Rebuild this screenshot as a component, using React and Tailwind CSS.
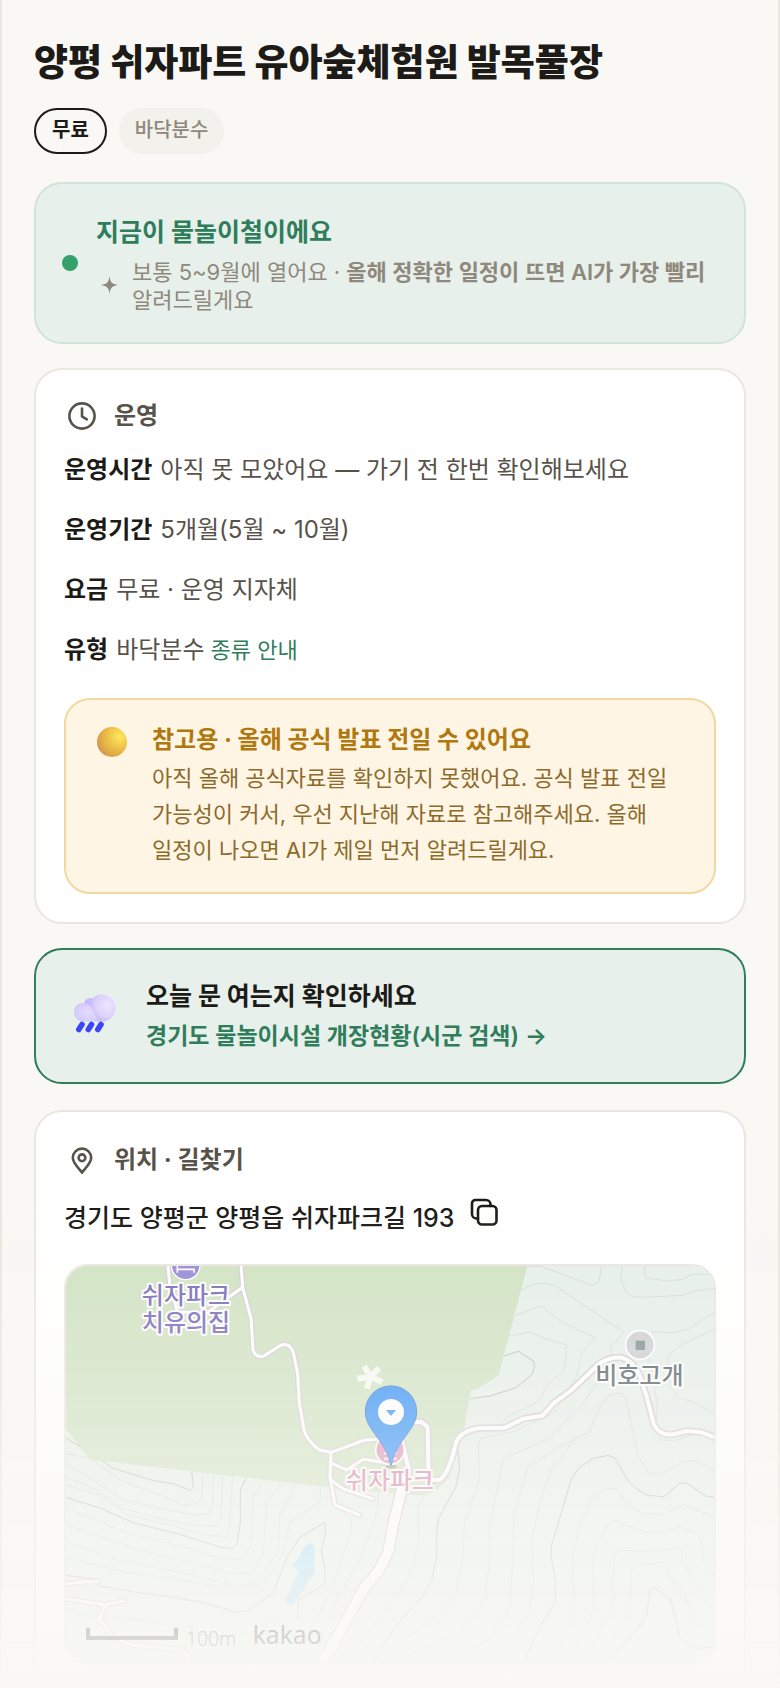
const infoRows = [
  { label: '운영시간', value: '아직 못 모았어요 — 가기 전 한번 확인해보세요' },
  { label: '운영기간', value: '5개월(5월 ~ 10월)' },
  { label: '요금', value: '무료 · 운영 지자체' },
  { label: '유형', value: '바닥분수', link: '종류 안내' },
];

// Contour lines on the left half of the map
const contoursLeft = [
  'M48 610 L120 625 L210 690 L330 735 L400 765 L440 760 L455 745 L458 668',
  'M48 640 L130 690 L220 750 L330 775 L430 795 L475 792 L487 770 L490 672',
  'M48 680 L140 720 L215 775 L330 805 L430 825 L500 828 L512 810 L518 676',
  'M48 705 L150 735 L235 795 L360 825 L470 855 L525 860 L538 840 L548 682',
  'M48 775 L150 815 L250 855 L400 890 L510 925 L570 930 L603 890 L610 740 L640 692',
  'M48 825 L180 870 L300 910 L420 935 L540 970 L610 968 L640 910 L645 820 L650 755 L695 700',
  'M48 875 L200 930 L330 955 L450 980 L560 1010 L625 995 L685 900 L688 800 L735 705',
  'M48 925 L220 965 L350 985 L480 1005 L570 1020 L640 1000 L700 910 L718 820 L810 755 L812 712',
  'M48 1075 L100 1095 L190 1100 L330 1120 L420 1150 L520 1165 L600 1150 L700 1090',
  'M850 760 L905 808 L903 850 L850 1000 L800 1110 L720 1230',
  'M985 720 L985 775 L930 930 L860 1050 L790 1235',
];

const contoursRight = [
  'M380 48 L425 50 L578 106 L597 95 L605 48',
  'M668 48 L662 85 L677 125 L700 140 L730 142 L850 136 L885 122 L942 115',
  'M735 48 L733 70 L740 84 L800 93 L845 88 L878 73 L942 73',
  'M362 122 L400 102 L442 100 L470 110 L672 247 L631 292 L637 320',
  'M345 197 L422 168 L487 217 L587 264 L547 304 L530 380 L460 490 L340 545 L243 565 L235 580 L238 685 L192 825 L190 910 L170 1025 L150 1065 L0 1180',
  'M325 258 L392 246 L438 267 L500 285 L495 345 L488 362 L442 405 L415 455 L322 500 L305 520',
  'M755 245 L823 248 L868 236 L942 188',
  'M942 238 L845 283 L806 315 L803 350 L812 410 L835 443 L890 460 L942 490',
  'M748 325 L772 465 L768 540 L783 570 L825 571 L900 548 L942 565',
  'M600 385 L548 462 L440 570 L310 625 L267 840 L271 905 L255 1050 L190 1140 L10 1225',
  'M942 660 L890 634 L850 634 L783 673 L745 670 L715 622 L678 450 L665 432 L650 429 L625 438 L602 466 L567 546 L480 590 L385 650 L342 790 L340 890 L330 1070 L270 1165 L160 1230',
  'M530 560 L455 660 L428 727 L395 865 L401 1005 L390 1080 L335 1175',
  'M942 800 L850 765 L787 793 L730 790 L688 768 L650 718 L630 714 L580 738 L548 800 L517 915 L525 1070 L460 1235',
  'M942 980 L912 938 L902 865 L888 848 L840 832 L790 847 L735 846 L640 812 L618 830 L578 920 L583 1075 L505 1235',
  'M942 1065 L920 1060 L885 995 L845 935 L847 898 L820 894 L780 903 L660 901 L643 912 L638 1075 L560 1215',
  'M942 1130 L900 1128 L875 1100 L855 1035 L806 978 L800 937 L785 937 L720 945 L693 962 L692 1085 L605 1230',
  'M70 738 L55 770 L55 888 L25 990 L-60 1100 L-160 1230',
];

function SectionTitle({ icon, children }) {
  return (
    <h2 className="flex items-center gap-4 text-2xl leading-8 font-bold text-[#57534a]">
      {icon}
      {children}
    </h2>
  );
}

function ClockIcon() {
  return (
    <svg className="ml-0.5 size-8" viewBox="0 0 32 32" fill="none" stroke="currentColor" strokeWidth="2.6" strokeLinecap="round" strokeLinejoin="round" aria-hidden="true">
      <circle cx="16" cy="16" r="12.6" />
      <path d="M16 8.5V16.4L20.8 19.4" />
    </svg>
  );
}

function PinIcon() {
  return (
    <svg className="ml-0.5 size-8" viewBox="0 0 32 32" fill="none" stroke="currentColor" strokeWidth="2.6" strokeLinejoin="round" aria-hidden="true">
      <path d="M16 28.6C12.4 24 6.8 19 6.8 13.8a9.2 9.2 0 0 1 18.4 0C25.2 19 19.6 24 16 28.6Z" />
      <circle cx="16" cy="13.8" r="3.4" />
    </svg>
  );
}

function CopyIcon() {
  return (
    <svg className="size-7" viewBox="0 0 28 28" fill="none" stroke="currentColor" strokeWidth="2.6" strokeLinecap="round" strokeLinejoin="round" aria-hidden="true">
      <rect x="8" y="8" width="18.5" height="18.5" rx="4" />
      <path d="M8 20.5H6.5C4 20.5 2 18.5 2 16V5.500C2 3.500 3.500 2 5.500 2H16C18.500 2 20.500 4 20.500 6.500V8" />
    </svg>
  );
}

function Sparkle() {
  return (
    <svg className="size-5 shrink-0" viewBox="0 0 20 20" fill="#8f887c" aria-hidden="true">
      <path d="M9.500 0.500 C10.500 6.500 12 8 18 9 C12 10 10.500 11.500 9.500 17.500 C8.500 11.500 7 10 1 9 C7 8 8.500 6.500 9.500 0.500Z" />
    </svg>
  );
}

function Coin() {
  return (
    <svg className="mt-1 size-8 shrink-0" viewBox="0 0 32 32" aria-hidden="true">
      <defs>
        <radialGradient id="coin" cx="0.75" cy="0.32" r="0.8">
          <stop offset="0" stopColor="#ffe85c" />
          <stop offset="0.5" stopColor="#edc148" />
          <stop offset="0.9" stopColor="#d9a145" />
          <stop offset="1" stopColor="#d38f58" />
        </radialGradient>
      </defs>
      <circle cx="16" cy="16" r="15" fill="url(#coin)" />
    </svg>
  );
}

function RainCloud() {
  return (
    <svg className="size-12 shrink-0" viewBox="0 0 48 48" aria-hidden="true">
      <defs>
        <radialGradient id="cloudBig" cx="0.68" cy="0.4" r="0.7">
          <stop offset="0" stopColor="#eee5ff" />
          <stop offset="0.6" stopColor="#dcd2fd" />
          <stop offset="1" stopColor="#c0b6f5" />
        </radialGradient>
        <radialGradient id="cloudSmall" cx="0.5" cy="0.5" r="0.65">
          <stop offset="0" stopColor="#e4dcfe" />
          <stop offset="0.7" stopColor="#d7cdfd" />
          <stop offset="1" stopColor="#c3baf8" />
        </radialGradient>
      </defs>
      <g>
        <circle cx="18" cy="12" r="6" fill="#c5bcf8" />
        <circle cx="30" cy="16" r="13.5" fill="url(#cloudBig)" />
        <path d="M11 11 C16 11 20 15 21 19 C24 24 25 29.500 30 29.500 L12 29.500 C6 29.500 2 25.500 2 20 C2 14.500 6 11 11 11Z" fill="url(#cloudSmall)" />
      </g>
      <g stroke="#3a45fb" strokeWidth="5.6" strokeLinecap="round">
        <path d="M10 32.500 L6.800 37.500" />
        <path d="M19.500 32.500 L16.300 37.500" />
        <path d="M29 32.500 L25.800 37.500" />
      </g>
    </svg>
  );
}

function ParkMap() {
  return (
    <svg
      className="block w-full rounded-[22px] bg-[#e6efe9]"
      viewBox="48 48 1944 1191"
      preserveAspectRatio="xMidYMid slice"
      fill="none"
      role="img"
      aria-label="쉬자파크"
    >
      <g stroke="#d3dcd5" strokeWidth="3">
        {contoursLeft.map((d) => (
          <path key={d} d={d} />
        ))}
        <g transform="translate(1050 0)">
          {contoursRight.map((d) => (
            <path key={d} d={d} />
          ))}
        </g>
      </g>

      {/* Index contours are a little darker */}
      <g stroke="#b3bcae" strokeWidth="3">
        <path d="M48 563 L90 590 L155 632 L190 655 L310 692 L375 702 L420 722 L430 712 L425 663" />
        <path d="M48 742 L155 776 L250 818 L385 852 L510 891 L550 895 L561 880 L571 820 L571 720 L588 684" />
        <path d="M48 976 L140 988 L145 1007 L250 1025 L370 1042 L460 1058 L560 1087 L597 1082 L670 1028 L712 920 L750 862 L824 817 L826 850 L814 900 L825 960 L824 1005 L745 1050 L742 1110" />
        <path d="M1222 585 L1229 655 L1218 710 L1166 805 L1160 850 L1160 920 L1146 985 L1118 1040 L1040 1125 L970 1235" />
        <path d="M1260 446 L1320 438 L1398 413 L1447 372 L1454 350 L1450 333 L1405 304 L1362 318" />
        <path d="M1992 742 L1967 738 L1910 699 L1890 699 L1842 740 L1793 736 L1757 715 L1733 690 L1695 625 L1675 616 L1630 625 L1585 655 L1563 690 L1504 888 L1504 925 L1517 995 L1515 1055 L1470 1130 L1423 1235" />
        <path d="M1992 1190 L1950 1195 L1920 1190 L1890 1160 L1862 1050 L1815 1012 L1800 1018 L1790 1095 L1765 1135 L1705 1195 L1690 1235" />
      </g>

      <path d="M48 48 H1432 L1346 374 L1285 416 L1263 420 L1243 535 L1220 590 L1200 680 L1160 720 L1124 736 L1080 735 L838 712 L122 629 L48 537Z" fill="#cfe2c1" />
      <path d="M780 880 Q795 880 793 900 L793 975 L780 985 L735 1060 Q715 1070 705 1055 L745 965 L727 945 L752 915 Q760 885 780 880Z" fill="#a8dcf5" />

      <g strokeLinejoin="round" strokeLinecap="round">
        <g stroke="#d5cdd1" strokeWidth="17">
          <path d="M352 30 L360 110 L382 185 L470 190 L578 112 L572 30" />
          <path d="M578 112 L603 205 L609 300 Q615 322 640 319 L690 287 Q718 275 730 308 L743 370 L748 460 L763 545 Q775 575 808 600 L843 607 L945 570 L985 568" />
          <path d="M843 607 L840 680 L855 765 L928 795" />
          <path d="M845 640 L890 660 L940 628 L1000 637" />
          <path d="M843 690 L880 717 L968 746" />
          <path d="M48 1002 L100 995 L143 995" />
          <path d="M48 1046 L165 1065 L222 1052 M165 1070 L147 1105 L190 1165 L250 1185 L400 1200 L418 1235" />
        </g>
        <g stroke="#ffffff" strokeWidth="9">
          <path d="M352 30 L360 110 L382 185 L470 190 L578 112 L572 30" />
          <path d="M578 112 L603 205 L609 300 Q615 322 640 319 L690 287 Q718 275 730 308 L743 370 L748 460 L763 545 Q775 575 808 600 L843 607 L945 570 L985 568" />
          <path d="M843 607 L840 680 L855 765 L928 795" />
          <path d="M845 640 L890 660 L940 628 L1000 637" />
          <path d="M843 690 L880 717 L968 746" />
          <path d="M48 1002 L100 995 L143 995" />
          <path d="M48 1046 L165 1065 L222 1052 M165 1070 L147 1105 L190 1165 L250 1185 L400 1200 L418 1235" />
        </g>
        <g stroke="#d5cdd1" strokeWidth="22">
          <path d="M1090 517 L1115 516 L1133 532 L1136 690 L1168 690 Q1195 675 1215 590 Q1222 545 1285 535 L1365 533 L1420 506 L1478 497 L1510 460 L1565 420 L1640 348 Q1670 320 1715 323 Q1755 335 1770 380 L1790 440 L1812 525 Q1830 558 1870 553 L1910 543 L1955 547 L2010 568" />
          <path d="M1055 570 L1078 665" />
        </g>
        <path d="M1060 700 L1030 820 L1015 905 L985 965 L945 1010 L820 1235" stroke="#d5cdd1" strokeWidth="38" />
        <path d="M1060 700 L1030 820 L1015 905 L985 965 L945 1010 L820 1235" stroke="#ffffff" strokeWidth="29" />
        <g stroke="#ffffff" strokeWidth="12">
          <path d="M1090 517 L1115 516 L1133 532 L1136 690 L1168 690 Q1195 675 1215 590 Q1222 545 1285 535 L1365 533 L1420 506 L1478 497 L1510 460 L1565 420 L1640 348 Q1670 320 1715 323 Q1755 335 1770 380 L1790 440 L1812 525 Q1830 558 1870 553 L1910 543 L1955 547 L2010 568" />
          <path d="M1055 570 L1078 665" />
        </g>
      </g>

      <path d="M962 380 L942 348 M962 380 L987 354 M962 380 L922 386 M962 380 L996 396 M962 380 L950 416" stroke="#f8faf5" strokeWidth="18" />

      {/* Place markers */}
      <circle cx="407" cy="46" r="43" fill="#9587d6" stroke="#fff" strokeWidth="4" />
      <path d="M382 30 V68 M382 58 H432 V68 M394 48 V38 H424 V48" stroke="#fff" strokeWidth="5" />
      <circle cx="1770" cy="285" r="43" fill="#cccdd2" stroke="#fff" strokeWidth="5" />
      <rect x="1757" y="272" width="28" height="28" fill="#7d8b90" />
      <circle cx="1020" cy="600" r="43" fill="#dd8db3" stroke="#fff" strokeWidth="5" />
      <path d="M1002 610 H1040 M1002 626 H1040" stroke="#fff" strokeWidth="5" />

      <g
        fontFamily='"Noto Sans CJK KR", sans-serif'
        fontSize="72"
        fontWeight="500"
        textAnchor="middle"
        stroke="#fff"
        strokeWidth="12"
        strokeLinejoin="round"
        paintOrder="stroke"
      >
        <text fill="#7565b8">
          <tspan x="408" y="162">쉬자파크</tspan>
          <tspan x="408" y="243">치유의집</tspan>
        </text>
        <text x="1768" y="401" fill="#4d5a5f">비호고개</text>
        <text x="1020" y="716" fill="#d27aa6">쉬자파크</text>
      </g>

      {/* Current destination */}
      <ellipse cx="1023" cy="650" rx="18" ry="6" fill="#777" opacity="0.6" />
      <path d="M1023 408 C980 408 946 442 946 486 C946 540 1008 570 1022 646 H1024 C1038 570 1100 540 1100 486 C1100 442 1066 408 1023 408Z" fill="#2b8df7" stroke="#2a6fd0" strokeWidth="3" />
      <circle cx="1023" cy="486" r="39" fill="#fff" />
      <path d="M1008 480 H1038 L1023 498Z" fill="#2b8df7" />

      {/* Scale bar */}
      <path d="M114 1133 V1164 H378 V1133" stroke="#222" strokeWidth="12" />
      <text x="408" y="1187" fill="#444" fontFamily='"Noto Sans", sans-serif' fontSize="58" fontWeight="300">100m</text>
      <text x="608" y="1182" fill="#222" fontFamily='"Noto Sans", sans-serif' fontSize="74" fontWeight="400">kakao</text>
    </svg>
  );
}

export default function App() {
  return (
    <main className="relative min-h-screen break-keep border-x-2 border-[#e9e7df] bg-[#faf8f5] px-8 pt-9 font-[Inter,'Noto_Sans_CJK_KR',sans-serif] text-[#1c1b18]">
      <h1 className="text-[37px] leading-[54px] font-extrabold">양평 쉬자파트 유아숲체험원 발목풀장</h1>

      <div className="mt-4.5 flex gap-3 text-xl leading-6">
        <span className="rounded-full border-2 border-[#1c1b18] px-4 pt-2 pb-2.5 font-semibold">무료</span>
        <span className="rounded-full border-2 border-[#f3f1ec] bg-[#f3f1ec] px-3.5 pt-2 pb-2.5 font-medium text-[#8f887c]">바닥분수</span>
      </div>

      <section className="mt-7 flex items-center gap-4.5 rounded-[28px] border-2 border-[#cfe5d9] bg-[#e8f0eb] px-6.5 py-7">
        <span className="size-4 shrink-0 rounded-full bg-[#34a06c]"></span>
        <div>
          <p className="text-[25px] leading-10 font-bold text-[#2f7d5b]">지금이 물놀이철이에요</p>
          <div className="flex items-center gap-3 pt-1.5 pl-1 text-[22px] leading-7 text-[#8f887c]">
            <Sparkle />
            <p>
              보통 5~9월에 열어요 · <b className="font-semibold">올해 정확한 일정이 뜨면 AI가 가장 빨리</b> 알려드릴게요
            </p>
          </div>
        </div>
      </section>

      <section className="mt-6 rounded-[28px] border-2 border-[#e9e7df] bg-white px-7 pt-7.5 pb-7">
        <SectionTitle icon={<ClockIcon />}>운영</SectionTitle>
        <dl className="mt-4.5 space-y-5 text-2xl leading-10 text-[#57534a]">
          {infoRows.map((row) => (
            <div key={row.label} className="flex items-baseline gap-2">
              <dt className="font-bold text-[#1c1b18]">{row.label}</dt>
              <dd>
                {row.value}
                {row.link && (
                  <a href="#types" className="ml-1.5 text-[22px] text-[#2f7d5b]">
                    {row.link}
                  </a>
                )}
              </dd>
            </div>
          ))}
        </dl>

        <div className="mt-7 flex items-start gap-6 rounded-[26px] border-2 border-[#f0d9a0] bg-[#fff5e4] px-7.5 pt-5.5 pb-6">
          <Coin />
          <div>
            <p className="text-2xl leading-9 font-bold text-[#b0780e]">참고용 · 올해 공식 발표 전일 수 있어요</p>
            <p className="mt-0.5 text-[22px] leading-9 text-[#8c6a2b]">
              아직 올해 공식자료를 확인하지 못했어요. 공식 발표 전일 가능성이 커서, 우선 지난해 자료로 참고해주세요. 올해 일정이 나오면 AI가 제일 먼저 알려드릴게요.
            </p>
          </div>
        </div>
      </section>

      <a href="#open-status" className="mt-6 flex items-center gap-6.5 rounded-[28px] border-2 border-[#2f7d5b] bg-[#e8f0eb] px-9 py-6.5">
        <RainCloud />
        <span>
          <span className="block text-[25px] leading-10 font-bold">오늘 문 여는지 확인하세요</span>
          <span className="block text-[23px] leading-10 font-semibold text-[#2f7d5b]">경기도 물놀이시설 개장현황(시군 검색) →</span>
        </span>
      </a>

      <section className="mt-6.5 rounded-t-[28px] border-2 border-b-0 border-[#e9e7df] bg-white px-7 pt-8 pb-5">
        <SectionTitle icon={<PinIcon />}>위치 · 길찾기</SectionTitle>
        <div className="mt-5.5 flex items-start gap-4 text-[25px] leading-10 font-medium">
          <span>경기도 양평군 양평읍 쉬자파크길 193</span>
          <button type="button" aria-label="주소 복사">
            <CopyIcon />
          </button>
        </div>
        <div className="mt-6.5 rounded-3xl border-2 border-[#e9e7df]">
          <ParkMap />
        </div>
      </section>

      <div className="pointer-events-none fixed inset-x-0 bottom-0 h-[480px] bg-linear-to-b from-[#f9f8f4]/0 via-[#f9f8f4]/85 via-90% to-[#f9f8f4]"></div>
    </main>
  );
}
